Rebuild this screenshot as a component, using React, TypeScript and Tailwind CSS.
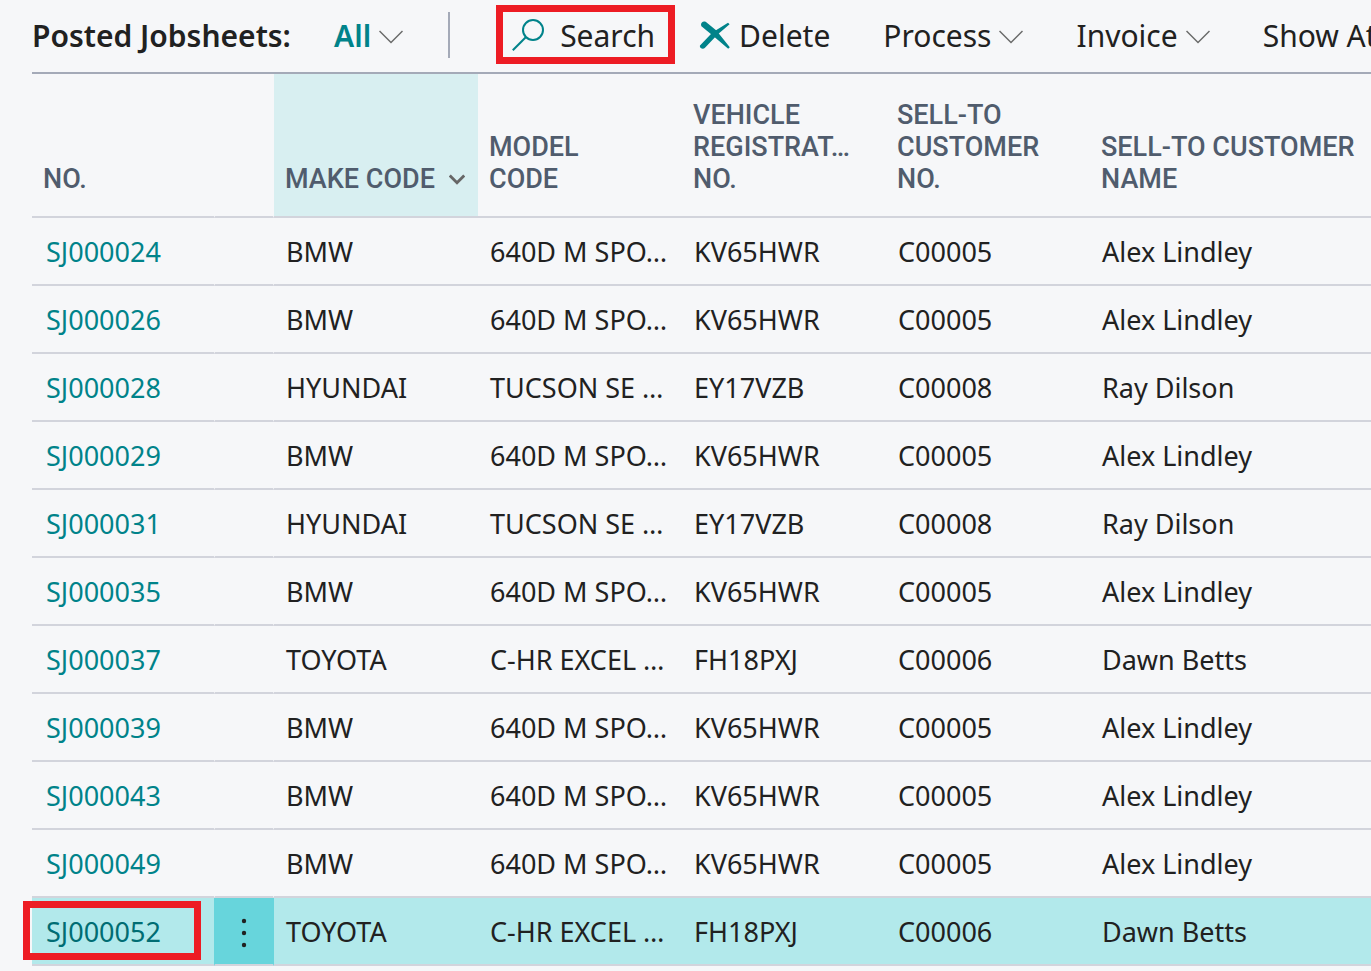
type Job = {
  no: string;
  make: string;
  model: string;
  reg: string;
  customerNo: string;
  customer: string;
};

const BMW = { make: "BMW", model: "640D M SPO…", reg: "KV65HWR", customerNo: "C00005", customer: "Alex Lindley" };
const HYUNDAI = { make: "HYUNDAI", model: "TUCSON SE …", reg: "EY17VZB", customerNo: "C00008", customer: "Ray Dilson" };
const TOYOTA = { make: "TOYOTA", model: "C-HR EXCEL …", reg: "FH18PXJ", customerNo: "C00006", customer: "Dawn Betts" };

const jobs: Job[] = [
  { no: "SJ000024", ...BMW },
  { no: "SJ000026", ...BMW },
  { no: "SJ000028", ...HYUNDAI },
  { no: "SJ000029", ...BMW },
  { no: "SJ000031", ...HYUNDAI },
  { no: "SJ000035", ...BMW },
  { no: "SJ000037", ...TOYOTA },
  { no: "SJ000039", ...BMW },
  { no: "SJ000043", ...BMW },
  { no: "SJ000049", ...BMW },
  { no: "SJ000052", ...TOYOTA },
];

const SELECTED = "SJ000052";

function Chevron() {
  return (
    <svg className="h-6 w-6 shrink-0" viewBox="0 0 24 24" fill="none" stroke="#6b6b6b" strokeWidth="1.5" aria-hidden="true">
      <path d="M0.5 8 L12 19.5 L23.5 8" />
    </svg>
  );
}

function SearchIcon() {
  return (
    <svg className="h-8 w-8 shrink-0" viewBox="0 0 32 32" fill="none" stroke="#00838a" strokeWidth="2" aria-hidden="true">
      <circle cx="21" cy="11" r="10" />
      <path d="M14 18 L0.8 31.2" />
    </svg>
  );
}

function DeleteIcon() {
  return (
    <svg className="h-7 w-8 shrink-0" viewBox="0 0 32 28" fill="#00838a" aria-hidden="true">
      <path d="M2.4 5.2 C1 2.4 3.6 -0.6 7 1 L17.4 9.6 L30.8 26.2 L29.2 27.8 L13.4 14.2 Z" />
      <path d="M6 26.8 C4.2 28.6 0 27.4 1 24.4 L13.4 11.4 L29 1.8 L30.6 3.2 L18.6 13.4 Z" />
    </svg>
  );
}

function Header({ lines }: { lines: string[] }) {
  return (
    <th scope="col" className="border-b-2 border-[#d2d4dc] pb-[21px] pl-[11px] align-bottom font-medium">
      {lines.map((line) => (
        <span key={line} className="block whitespace-nowrap">
          {line}{" "}
        </span>
      ))}
    </th>
  );
}

export default function App() {
  return (
    <div className="min-h-screen overflow-hidden bg-[#f6f7f9] pl-8 font-['Noto_Sans',sans-serif] text-[#212121]">
      <header className="flex h-[74px] items-center border-b-2 border-[#a4aab8] pb-0.5 text-[30px] whitespace-nowrap">
        <h1 className="w-[302px] shrink-0 font-semibold">Posted Jobsheets:</h1>
        <button type="button" className="flex shrink-0 items-center gap-2 font-semibold text-[#00838a]">
          All
          <Chevron />
        </button>
        <div className="ml-[45px] h-[46px] w-0.5 shrink-0 bg-[#a4aab8]" />
        <button type="button" className="relative ml-[62px] flex shrink-0 items-center gap-4">
          <SearchIcon />
          Search
          <span className="pointer-events-none absolute -top-2 -right-5 -bottom-1.5 -left-4 border-[7px] border-[#ed1c24]" />
        </button>
        <button type="button" className="ml-11 flex shrink-0 items-center gap-2">
          <DeleteIcon />
          Delete
        </button>
        <button type="button" className="ml-[53px] flex shrink-0 items-center gap-2">
          Process
          <Chevron />
        </button>
        <button type="button" className="ml-[53px] flex shrink-0 items-center gap-2">
          Invoice
          <Chevron />
        </button>
        <button type="button" className="ml-[53px] shrink-0">
          Show Attached
        </button>
      </header>

      <table className="w-full table-fixed border-separate border-spacing-0 text-left">
        <colgroup>
          <col className="w-[182px]" />
          <col className="w-[60px]" />
          <col className="w-[204px]" />
          <col className="w-[204px]" />
          <col className="w-[204px]" />
          <col className="w-[204px]" />
          <col />
        </colgroup>
        <thead className="font-['Roboto',sans-serif] text-[27px] leading-8 text-[#505c6d]">
          <tr className="h-36">
            <Header lines={["NO."]} />
            <td className="border-x border-b-2 border-x-transparent border-b-[#d2d4dc]" />
            <th scope="col" className="border-b-2 border-[#d2d4dc] bg-[#d8eff1] pb-[21px] pl-[11px] align-bottom font-medium">
              <button type="button" className="flex items-center gap-3.5 whitespace-nowrap">
                MAKE CODE
                <svg className="h-4 w-4 shrink-0" viewBox="0 0 16 16" fill="none" stroke="#666666" strokeWidth="2.8" aria-hidden="true">
                  <path d="M0.8 4.5 L8 11.7 L15.2 4.5" />
                </svg>
              </button>
            </th>
            <Header lines={["MODEL", "CODE"]} />
            <Header lines={["VEHICLE", "REGISTRAT…", "NO."]} />
            <Header lines={["SELL-TO", "CUSTOMER", "NO."]} />
            <Header lines={["SELL-TO CUSTOMER", "NAME"]} />
          </tr>
        </thead>
        <tbody className="text-[27px] leading-9 whitespace-nowrap [&_td]:pt-0.5">
          {jobs.map((job) => {
            const selected = job.no === SELECTED;
            return (
              <tr key={job.no} className={selected ? "h-[68px] bg-[#b2e9eb]" : "h-[68px]"}>
                <td className="relative border-b-2 border-[#d2d4dc] pl-[14px]">
                  <a href={`#${job.no}`} className={selected ? "text-[#006d73]" : "text-[#00838a]"}>
                    {job.no}
                  </a>
                  {selected && (
                    <span className="pointer-events-none absolute top-[3px] -left-[9px] h-[59px] w-[178px] border-[7px] border-[#ed1c24]" />
                  )}
                </td>
                <td
                  className={
                    selected
                      ? "border-x border-b-2 border-x-transparent border-b-[#d2d4dc] bg-[#67d5dc]"
                      : "border-x border-b-2 border-x-transparent border-b-[#d2d4dc]"
                  }
                >
                  {selected && (
                    <button type="button" aria-label="Show more options" className="flex w-full justify-center">
                      <svg className="h-8 w-2" viewBox="0 0 8 32" fill="#212121" aria-hidden="true">
                        <circle cx="4" cy="5" r="2.2" />
                        <circle cx="4" cy="17" r="2.2" />
                        <circle cx="4" cy="29" r="2.2" />
                      </svg>
                    </button>
                  )}
                </td>
                <td className="border-b-2 border-[#d2d4dc] pl-3">{job.make}</td>
                <td className="border-b-2 border-[#d2d4dc] pl-3">{job.model}</td>
                <td className="border-b-2 border-[#d2d4dc] pl-3">{job.reg}</td>
                <td className="border-b-2 border-[#d2d4dc] pl-3">{job.customerNo}</td>
                <td className="border-b-2 border-[#d2d4dc] pl-3">{job.customer}</td>
              </tr>
            );
          })}
        </tbody>
      </table>
    </div>
  );
}
